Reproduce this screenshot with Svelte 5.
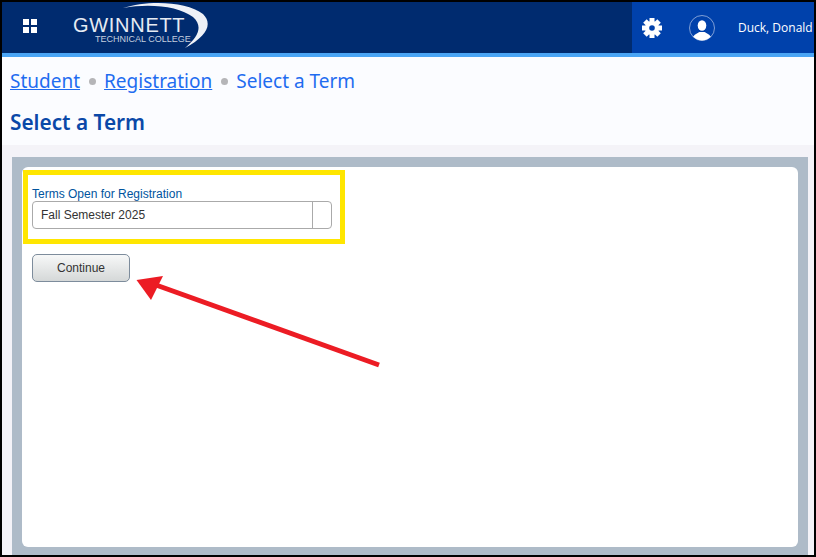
<script>
    let crumbs = [
        { label: 'Student', link: true },
        { label: 'Registration', link: true },
        { label: 'Select a Term', link: false }
    ];

    // gear teeth, every 45deg
    let teeth = [0, 45, 90, 135, 180, 225, 270, 315];
</script>

<div class="shot">
    <header class="topbar">
        <div class="brand">
            <svg class="grid-icon" width="14" height="14" viewBox="0 0 14 14" aria-hidden="true">
                <rect x="0" y="0" width="6" height="6" fill="#fff" />
                <rect x="8" y="0" width="6" height="6" fill="#fff" />
                <rect x="0" y="8" width="6" height="6" fill="#fff" />
                <rect x="8" y="8" width="6" height="6" fill="#fff" />
            </svg>
            <div class="logo">
                <svg class="swoosh" width="116" height="50" viewBox="0 0 116 50" aria-hidden="true">
                    <path d="M28 6 C52 -2 92 -1 108 12 C118 22 112 34 90 46 C104 34 108 24 98 15 C84 4 54 1 28 6 Z" fill="#eef1f7" />
                </svg>
                <span class="logo-name">GWINNETT</span>
                <span class="logo-sub">TECHNICAL COLLEGE</span>
            </div>
        </div>
        <div class="user-area">
            <svg class="gear" width="20" height="20" viewBox="0 0 20 20" aria-hidden="true">
                <circle cx="10" cy="10" r="7" fill="#fff" />
                {#each teeth as deg}
                    <rect x="7.500" y="0" width="5" height="5" fill="#fff" transform="rotate({deg} 10 10)" />
                {/each}
                <circle cx="10" cy="10" r="2.800" fill="#0041ab" />
            </svg>
            <svg class="avatar" width="26" height="26" viewBox="0 0 26 26" aria-hidden="true">
                <defs>
                    <clipPath id="avatar-clip"><circle cx="13" cy="13" r="12.500" /></clipPath>
                </defs>
                <circle cx="13" cy="13" r="12.500" fill="none" stroke="#9fb6e0" stroke-width="0.800" />
                <g clip-path="url(#avatar-clip)" fill="#fff">
                    <ellipse cx="13" cy="10.500" rx="4.300" ry="5.300" />
                    <path d="M3 26 C3 20 8 18.500 10.500 17 L15.500 17 C18 18.500 23 20 23 26 Z" />
                </g>
            </svg>
            <span class="user-name">Duck, Donald</span>
        </div>
    </header>

    <div class="title-area">
        <nav class="crumbs">
            {#each crumbs as crumb, i}
                {#if i > 0}<span class="dot"></span>{/if}
                {#if crumb.link}
                    <a href="#top">{crumb.label}</a>
                {:else}
                    <span>{crumb.label}</span>
                {/if}
            {/each}
        </nav>
        <h1>Select a Term</h1>
    </div>

    <main class="page">
        <section class="panel">
            <div class="card">
                <div class="highlight">
                    <label for="term">Terms Open for Registration</label>
                    <div class="select" id="term">
                        <span class="value">Fall Semester 2025</span>
                        <span class="arrow"></span>
                    </div>
                </div>
                <button type="button">Continue</button>
            </div>
        </section>
    </main>

    <svg class="pointer" width="260" height="100" viewBox="0 0 260 100" aria-hidden="true">
        <line x1="243" y1="88" x2="20" y2="8" stroke="#ec1c24" stroke-width="5" />
        <polygon points="0.500,3 27,-1 15,23" fill="#ec1c24" />
    </svg>
</div>

<style>
    :global(body) {
        background: #000;
    }

    .shot {
        position: relative;
        width: 816px;
        height: 557px;
        box-sizing: border-box;
        border: 2px solid #000;
        background: #f4f3f8;
        display: flex;
        flex-direction: column;
        overflow: hidden;
        font-family: "Liberation Sans", Arial, sans-serif;
    }

    .topbar {
        flex: none;
        height: 55px;
        box-sizing: border-box;
        display: flex;
        justify-content: space-between;
        background: #002b6f;
        border-bottom: 4px solid #4aa5f5;
    }

    .brand {
        display: flex;
        align-items: flex-start;
        padding: 17px 0 0 21px;
    }

    .grid-icon {
        flex: none;
    }

    .logo {
        position: relative;
        margin: -17px 0 0 36px;
        width: 140px;
        height: 51px;
        color: #e6ebf3;
    }

    .swoosh {
        position: absolute;
        left: 22px;
        top: 0;
    }

    .logo-name {
        position: absolute;
        left: 0;
        top: 15px;
        font-size: 20px;
        line-height: 17px;
        letter-spacing: 0.7px;
        white-space: nowrap;
    }

    .logo-sub {
        position: absolute;
        left: 22px;
        top: 33px;
        font-size: 9px;
        line-height: 9px;
        white-space: nowrap;
        color: #c5cfdf;
    }

    .user-area {
        width: 182px;
        display: flex;
        align-items: center;
        background: #0041ab;
        padding-left: 10px;
        box-sizing: border-box;
        overflow: hidden;
    }

    .gear,
    .avatar {
        flex: none;
    }

    .avatar {
        margin-left: 27px;
    }

    .user-name {
        margin-left: 23px;
        font-family: "Open Sans", sans-serif;
        font-size: 12px;
        color: #fff;
        white-space: nowrap;
    }

    .title-area {
        flex: none;
        height: 88px;
        background: #fbfcff;
        padding: 11px 0 0 8px;
        box-sizing: border-box;
    }

    .crumbs {
        display: flex;
        align-items: center;
        gap: 8.500px;
        font-family: "Noto Sans", sans-serif;
        font-size: 19px;
        line-height: 26px;
        color: #1f6cf0;
    }

    .crumbs a {
        color: #1f6cf0;
    }

    .dot {
        width: 7px;
        height: 7px;
        border-radius: 50%;
        background: #b5b5b8;
    }

    h1 {
        margin: 14px 0 0;
        font-family: "Noto Sans", sans-serif;
        font-size: 20.800px;
        line-height: 28px;
        font-weight: 600;
        color: #0a48a8;
    }

    .page {
        flex: 1;
        padding: 12px 6px 0 10px;
        min-height: 0;
        display: flex;
    }

    .panel {
        flex: 1;
        padding: 10px 10px 8px;
        background: #aebbc8;
        display: flex;
    }

    .card {
        flex: 1;
        background: #fff;
        border-radius: 6px;
        padding: 3px 0 0 1px;
    }

    .highlight {
        width: 322px;
        height: 74px;
        padding: 12px 0 0 4px;
        box-sizing: border-box;
        border: 5px solid #ffe600;
    }

    label {
        display: block;
        font-size: 12px;
        line-height: 14px;
        color: #00549e;
    }

    .select {
        width: 300px;
        height: 28px;
        display: flex;
        border: 1px solid #aaa;
        border-radius: 4px;
        box-sizing: border-box;
    }

    .value {
        flex: 1;
        padding-left: 8px;
        font-size: 12px;
        line-height: 26px;
        color: #333;
    }

    .arrow {
        width: 18px;
        border-left: 1px solid #aaa;
    }

    button {
        display: block;
        width: 98px;
        height: 28px;
        margin: 10px 0 0 9px;
        padding: 0;
        border: 1px solid #7d8c9c;
        border-radius: 5px;
        background: linear-gradient(#f7f8f8, #d5d8d8);
        font-family: "Liberation Sans", Arial, sans-serif;
        font-size: 12px;
        color: #333;
    }

    .pointer {
        position: absolute;
        left: 134px;
        top: 275px;
        overflow: visible;
    }
</style>
